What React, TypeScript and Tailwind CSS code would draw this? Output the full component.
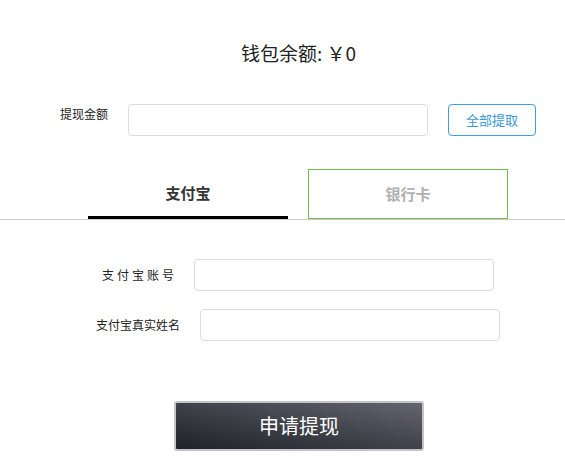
import React from 'react';

const font = { fontFamily: '"Noto Sans CJK SC", "Liberation Sans", sans-serif' };

export default function App() {
  return (
    <div className="w-[565px] h-[459px] bg-white text-[#222] overflow-hidden" style={font}>
      {/* 余额 */}
      <div className="pt-[40px] pl-[32px] flex justify-center">
        <div className="text-[19px] leading-[26px]">钱包余额: ￥0</div>
      </div>

      {/* 提现金额 */}
      <div className="mt-[38px] flex items-start pl-[60px]">
        <div className="w-[68px] text-[12px] leading-[18px] pt-[1px]">提现金额</div>
        <input className="w-[300px] h-[32px] border border-[#dcdcdc] rounded-[4px] outline-none" />
        <button className="ml-[20px] w-[88px] h-[32px] border border-[#3ba2dc] rounded-[4px] text-[13px] text-[#3b9ad6]">
          全部提取
        </button>
      </div>

      {/* tabs */}
      <div className="mt-[33px] border-b border-[#cccccc]">
        <div className="flex pl-[88px] gap-[20px]">
          <div className="w-[200px] h-[50px] flex items-center justify-center border-b-[3px] border-black pt-[1px]">
            <span className="text-[15px] font-bold text-[#333]">支付宝</span>
          </div>
          <div className="w-[200px] h-[50px] flex items-center justify-center border border-[#6cbd4a]">
            <span className="text-[15px] font-bold text-[#b0b0b0]">银行卡</span>
          </div>
        </div>
      </div>

      {/* form */}
      <div className="mt-[39px] flex items-center pl-[102px]">
        <div className="text-[12px] tracking-[3px] w-[92px]">支付宝账号</div>
        <input className="w-[300px] h-[32px] border border-[#dcdcdc] rounded-[4px] outline-none" />
      </div>
      <div className="mt-[18px] flex items-center pl-[96px]">
        <div className="text-[12px] w-[104px]">支付宝真实姓名</div>
        <input className="w-[300px] h-[32px] border border-[#dcdcdc] rounded-[4px] outline-none" />
      </div>

      {/* submit */}
      <div className="mt-[60px] pl-[174px]">
        <button className="w-[250px] h-[50px] rounded-[3px] border-2 border-[#c4c4c6] bg-gradient-to-tr from-[#1f2229] to-[#64656f] text-white text-[20px]">
          申请提现
        </button>
      </div>
    </div>
  );
}
